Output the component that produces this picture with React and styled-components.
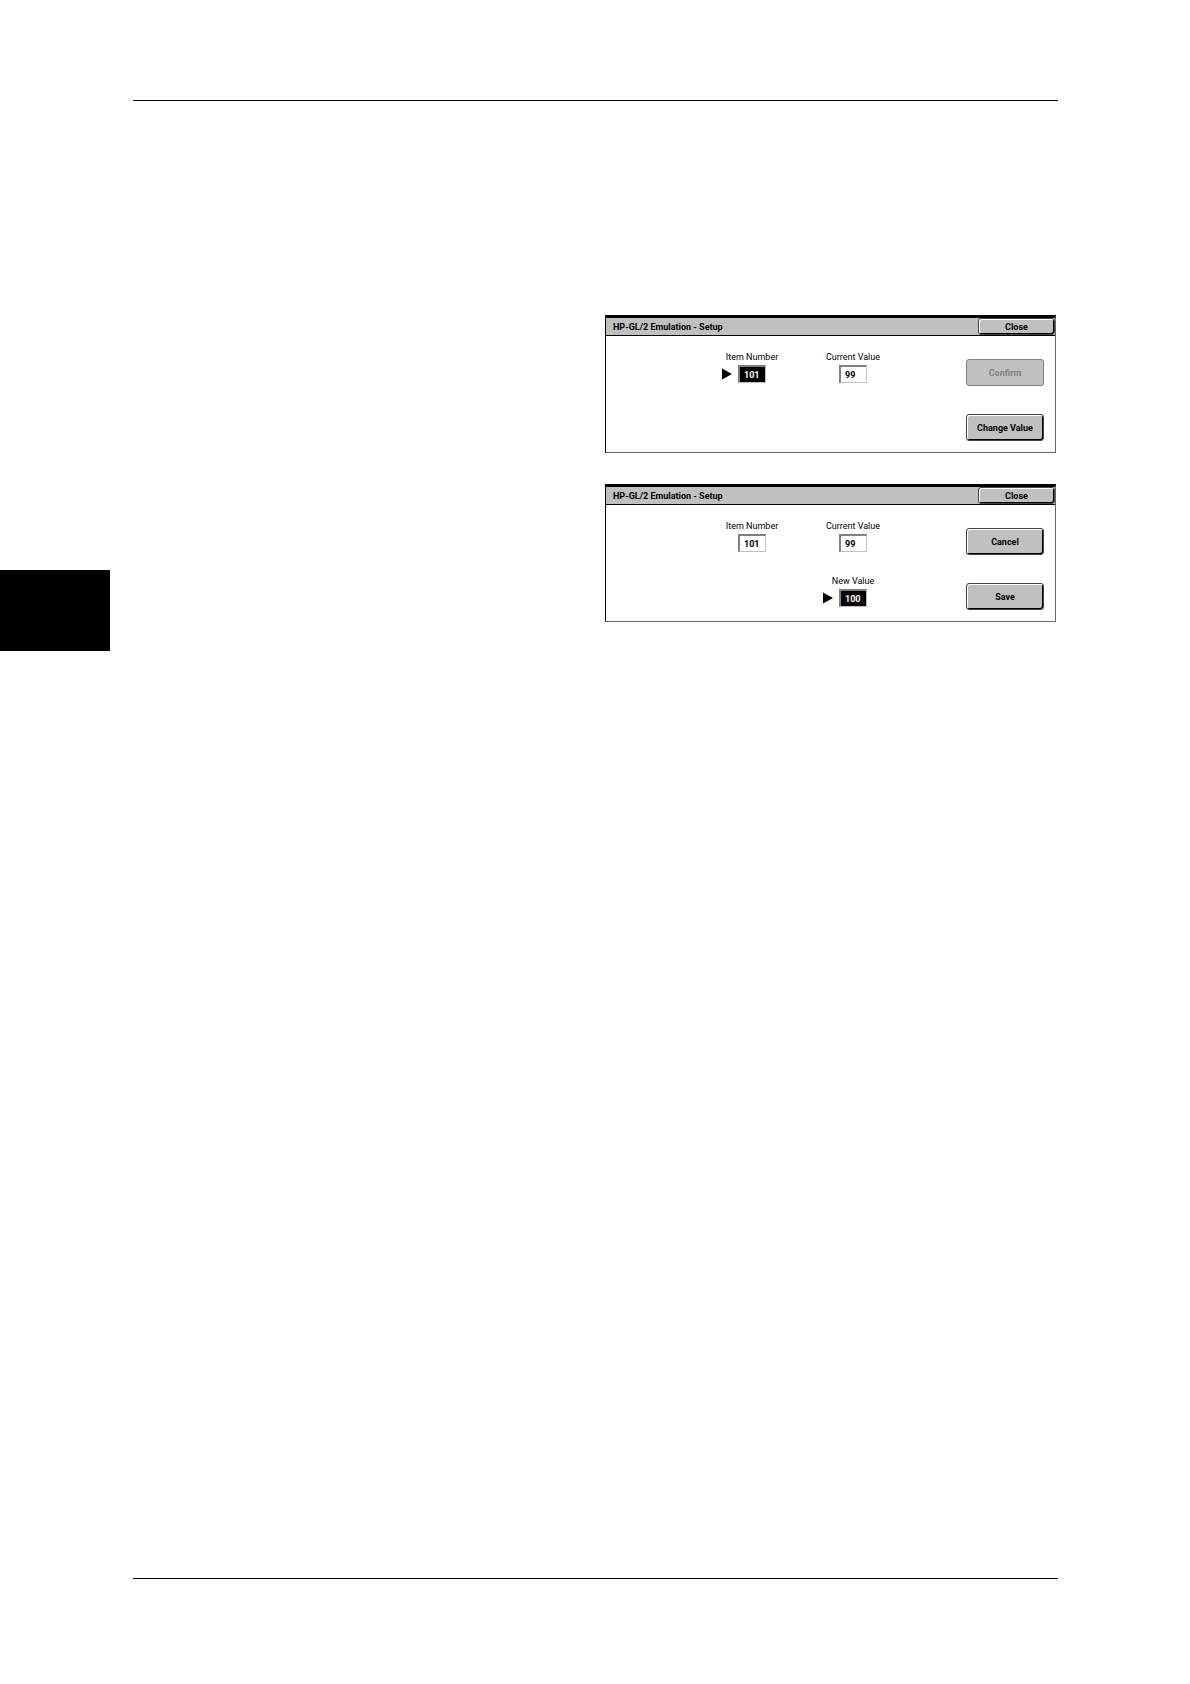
import React, { useState } from 'react';
import styled, { createGlobalStyle, css } from 'styled-components';

const GlobalStyle = createGlobalStyle`
  * {
    box-sizing: border-box;
  }

  body {
    margin: 0;
    background: #fff;
    color: #000;
    font-family: Roboto, "Liberation Sans", sans-serif;
    font-size: 9px;
    line-height: 12px;
  }
`;

const Page = styled.div`
  display: grid;
  grid-template-columns: 133px 472fr 451fr 2px 132px;
  grid-template-rows: 100px 1px 1fr 1px 105px;
  min-height: 100vh;
`;

const Rule = styled.hr`
  grid-column: 2 / 5;
  grid-row: ${(props) => props.$row};
  width: 100%;
  height: 1px;
  margin: 0;
  border: 0;
  background: #000;
`;

const ChapterTab = styled.aside`
  grid-column: 1;
  grid-row: 3;
  width: 110px;
  height: 81px;
  margin-top: 469px;
  background: #000;
`;

const Screens = styled.main`
  grid-column: 3;
  grid-row: 3;
  display: flex;
  flex-direction: column;
  gap: 31px;
  padding-top: 214px;
`;

const Screen = styled.section`
  border: 1px solid #666;
  border-top: 3px solid #000;
  border-left-color: #000;
`;

const TitleBar = styled.header`
  display: flex;
  align-items: center;
  justify-content: space-between;
  height: 18px;
  padding-left: 7px;
  border-bottom: 1px solid #000;
  background: #c0c0c0;
`;

const Title = styled.h2`
  margin: 0;
  font-size: 9px;
  font-weight: bold;
`;

const Body = styled.form`
  display: grid;
  grid-template-columns: 94fr 104fr 98fr 64fr 78px;
  grid-template-rows: 35px 35px;
  row-gap: 20px;
  padding: 15px 11px 11px 0;
`;

const FieldBox = styled.div`
  grid-column: ${(props) => props.$col};
  grid-row: ${(props) => props.$row};
  display: grid;
  grid-template-columns: 1fr auto 1fr;
  grid-template-rows: 12px 18px;
  row-gap: 2px;
`;

const Label = styled.label`
  grid-column: 1 / 4;
  text-align: center;
`;

const Marker = styled.svg`
  grid-column: 1;
  grid-row: 2;
  align-self: center;
  justify-self: end;
  margin-right: 6px;
`;

const Input = styled.input`
  grid-column: 2;
  grid-row: 2;
  width: 28px;
  height: 18px;
  padding: 0 0 0 4px;
  border: 2px solid #808080;
  border-right: 1px solid #c0c0c0;
  border-bottom: 1px solid #c0c0c0;
  border-radius: 0;
  outline: 0;
  background: #fff;
  color: #000;
  font: bold 9px Roboto, "Liberation Sans", sans-serif;

  ${(props) => props.$active && css`
    background: #000;
    color: #fff;
  `}
`;

const Button = styled.button`
  padding: 0;
  border: 1px solid #444;
  border-radius: 3px;
  background: #c0c0c0;
  color: #000;
  font: bold 9px Roboto, "Liberation Sans", sans-serif;
  box-shadow: inset 1px 1px 0 #fff, inset -1px -1px 0 #000;
`;

const CloseButton = styled(Button)`
  width: 77px;
  height: 17px;
`;

const ActionButton = styled(Button)`
  grid-column: 5;
  grid-row: ${(props) => props.$row};
  height: 27px;
  margin-top: 8px;

  &:disabled {
    border-color: #808080;
    color: #808080;
    box-shadow: none;
  }
`;

function Field({ id, label, value, col, row, active }) {
  const [text, setText] = useState(value);

  return (
    <FieldBox $col={col} $row={row}>
      <Label htmlFor={id}>{label}</Label>
      {active && (
        <Marker width="10" height="12" viewBox="0 0 10 12" aria-hidden="true">
          <path d="M0 0.5L10 6L0 11.5Z" fill="#000" />
        </Marker>
      )}
      <Input
        id={id}
        value={text}
        onChange={(e) => setText(e.target.value)}
        $active={active}
      />
    </FieldBox>
  );
}

function SetupScreen({ children }) {
  return (
    <Screen>
      <TitleBar>
        <Title>HP-GL/2 Emulation - Setup</Title>
        <CloseButton type="button">Close</CloseButton>
      </TitleBar>
      <Body onSubmit={(e) => e.preventDefault()}>{children}</Body>
    </Screen>
  );
}

function App() {
  return (
    <>
      <GlobalStyle />
      <Page>
        <Rule $row={2} />
        <ChapterTab />
        <Screens>
          <SetupScreen>
            <Field id="item" label="Item Number" value="101" col={2} row={1} active />
            <Field id="current" label="Current Value" value="99" col={3} row={1} />
            <ActionButton type="button" $row={1} disabled>Confirm</ActionButton>
            <ActionButton type="button" $row={2}>Change Value</ActionButton>
          </SetupScreen>
          <SetupScreen>
            <Field id="item-edit" label="Item Number" value="101" col={2} row={1} />
            <Field id="current-edit" label="Current Value" value="99" col={3} row={1} />
            <Field id="new-value" label="New Value" value="100" col={3} row={2} active />
            <ActionButton type="button" $row={1}>Cancel</ActionButton>
            <ActionButton type="submit" $row={2}>Save</ActionButton>
          </SetupScreen>
        </Screens>
        <Rule $row={4} />
      </Page>
    </>
  );
}

export default App;
